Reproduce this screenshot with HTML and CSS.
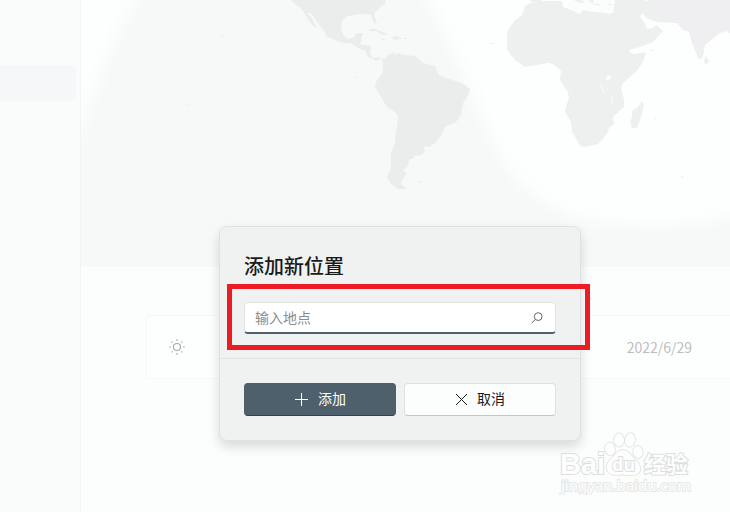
FILE: index.html
```
<!doctype html>
<html lang="zh-CN">
<head>
<meta charset="utf-8">
<link rel="stylesheet" href="styles.css">
<title>添加新位置</title>
</head>
<body>
<div class="app">
    <nav class="sidebar">
        <div class="nav-item"></div>
    </nav>

    <main class="content">
        <svg class="map" viewBox="81 0 649 267" preserveAspectRatio="xMinYMin slice" aria-hidden="true">
            <defs>
                <filter id="soft" x="-20%" y="-20%" width="140%" height="140%">
                    <feGaussianBlur stdDeviation="7"/>
                </filter>
                <linearGradient id="asia" gradientUnits="userSpaceOnUse" x1="640" y1="0" x2="665" y2="0">
                    <stop offset="0" stop-color="#eef0ef"/>
                    <stop offset="1" stop-color="#efeff2"/>
                </linearGradient>
            </defs>
            <!-- daylight -->
            <g fill="#fdfefe" filter="url(#soft)">
                <path d="M30-30H147L136 0 121 27 104 67 86 113 70 160H30z"/>
                <path d="M415-30L427 0C445 32 458 60 472 95C485 128 498 160 520 183C545 210 590 226 645 226Q700 226 740 215L790 195V-30z"/>
            </g>
            <!-- americas -->
            <g fill="#ebedec">
                <path d="M291 0l4 4 6 4 4 6 4 7 4 5 4 3-2-5-4-7-4-4 4 0 6 9 7 9 2 5 9 4 9 3h6l8 5 7 3 3 6 9 4 3-2 3 2 1-2-6-2-5 1-3-5 1-7-11-2 3-11-6 0-3 4-6 2-5-4-2-7 1-7 5-5 8-1 8-1 8 1 3 8 3 1-2-6-1-4 6-7 6-4-1-3z"/>
                <path d="M383 61l5-6 6-3 1 3 3-2 7 2 10 1 8 7 12 3 4 9 13 5 10 3 8 6-1 5-6 9-2 12-5 7-11 5-3 7-7 9-6 4-6-1 2 5-3 4-8 1-1 3h-4l-1 7-5 5 4 2-5 7-1 4 6 5h-9l-8-6-3-6 4-10V153l4-10 1-11 2-15-3-5-8-5-6-10-6-10 2-7 5-6 1-7z"/>
                <path d="M368 31q5-4 10-1l10 4-5 1-7-4zM391 38l4-2 7 2-7 2zM381 39h4v1h-4zM404 38h3v1h-3zM417 182l6-1-3 2zM355 77h2v1h-2zM465 187l3 1zM222 35h2v1h-2zM188 104h2v1h-2z"/>
            </g>
            <!-- africa, arabia and india -->
            <g fill="#eef0ef">
                <path d="M530 3l15-2 17 0 1 6 8 3 9 4 3-4 12 2 12 1 11 17 9 15 3 7 3 2 13-2-3 10-6 9-14 12-2 4 3 13v7l-11 10 1 7-5 4-2 6-9 10-8 2-8 1-3-3-2-4-5-8-1-10-6-10 2-9 2-4-1-7-8-12 1-9-3-3-5-4-5-1-11 2-12 2-10-7-8-10V32l8-12 7-5 3-9z"/>
                <path d="M642 101l2 5-4 14-3 8h-5l-2-6 2-5 0-6 6-4zM529 0h8l6-1-3 3h-7zM654 118h2v1h-2zM681 176l4 1-3 1zM650 50h3v1h-3zM491 43h3v1h-3z"/>
                <path fill="url(#asia)" d="M615 0l-2 13-5 1 7 13 8 12 6 11 11-3 13-5 10-11-7-6-3 3-6 1-2-5-5-7 2-4 6 6 9 3 20 1 6 7 6 2 3 11 7 17 4-3 2-12 15-12 7-2 5 4V0zM705 56l4 5-2 3-3-1z"/>
            </g>
            <path fill="#fbfcfc" d="M573 0h41l-1 12-11 0-9-2-10-2-4 4-10-4-2-5zM606 77l4-2 1 3-3 3-2-1zM600 84l1 0 4 9-1 0zM611 95l1 0 1 9-1 0zM643 0h8l-6 1z"/>
            <path fill="#eef0ef" d="M574 0h8l3 3-5 0zM588 0h5l1 4-3-1zM594 4h6v1h-6zM608 4h4v1h-4z"/>
        </svg>

        <section class="location">
            <svg class="icon-sun" viewBox="0 0 16 16" aria-hidden="true">
                <circle cx="8" cy="8" r="3.5"/>
                <path d="M8 .3v1.7M8 14v1.7M.3 8H2M14 8h1.7M2.6 2.6l1.1 1.1M12.3 12.3l1.1 1.1M2.6 13.4l1.1-1.1M12.3 3.7l1.1-1.1"/>
            </svg>
            <time class="date" datetime="2022-06-29">2022/6/29</time>
        </section>
    </main>
</div>

<div class="overlay">
    <form class="dialog" role="dialog" aria-labelledby="dialog-title">
        <div class="dialog-body">
            <h1 id="dialog-title">添加新位置</h1>
            <div class="search">
                <input class="search-input" type="text" placeholder="输入地点" aria-label="输入地点">
                <svg class="icon-search" viewBox="0 0 12 12" aria-hidden="true">
                    <circle cx="7.2" cy="4.6" r="3.9"/>
                    <path d="M4.4 7.4L.6 11.2"/>
                </svg>
                <span class="highlight"></span>
            </div>
        </div>
        <div class="dialog-footer">
            <button class="btn btn-primary" type="submit">
                <svg class="icon-add" viewBox="0 0 14 14" aria-hidden="true"><path d="M7.500 0v13M1 6.500h13"/></svg>
                <span>添加</span>
            </button>
            <button class="btn" type="button">
                <svg class="icon-close" viewBox="0 0 12 12" aria-hidden="true"><path d="M1 0l11 11M12 0l-11 11"/></svg>
                <span>取消</span>
            </button>
        </div>
    </form>
</div>

<svg class="watermark" viewBox="0 0 136 66" aria-hidden="true">
    <text class="mark-name" x="2" y="45">Bai</text>
    <g class="paw">
        <ellipse cx="52" cy="20" rx="4.8" ry="6.5" transform="rotate(-12 52 20)"/>
        <ellipse cx="61" cy="11" rx="5" ry="6.8"/>
        <ellipse cx="72" cy="11" rx="5" ry="6.8" transform="rotate(12 72 11)"/>
        <ellipse cx="80" cy="23" rx="4.8" ry="6" transform="rotate(-10 80 23)"/>
        <path d="M65 21C60 21 58 25 54 29C49 33 48 37 49 41C52 47 57 46 65 45.500C73 47 79 47 82 42C83 36 80 33 76 29C72 25 70 21 65 21z"/>
    </g>
    <text class="mark-du" x="54" y="42">du</text>
    <text class="mark-cn" x="86" y="43">经验</text>
    <text class="mark-url" x="3" y="62">jingyan.baidu.com</text>
</svg>
</body>
</html>
```

FILE: styles.css
```
* {
    box-sizing: border-box;
}
body {
    margin: 0;
    min-height: 100vh;
    overflow: hidden;
    position: relative;
    font-family: "Noto Sans CJK SC", sans-serif;
    font-size: 14px;
    line-height: 20px;
    color: #1a1a1a;
    background: #fcfefd;
}
.app {
    display: grid;
    grid-template-columns: 81px 1fr;
    min-height: 100vh;
}
.sidebar {
    padding: 65px 4px 0 0;
    background: #fafcfb;
    border-right: 1px solid #f3f5f4;
}
.nav-item {
    height: 36px;
    background: #f6f7f9;
    border-radius: 0 5px 5px 0;
}
.content {
    min-width: 0;
}
.map {
    display: block;
    width: 100%;
    height: 267px;
    background: #f7f8f8;
}
.location {
    display: flex;
    align-items: center;
    justify-content: space-between;
    height: 64px;
    margin: 48px 0 0 65px;
    padding: 0 38px 0 22px;
    background: #fdfefe;
    border: 1px solid #f5f7f6;
    border-right: 0;
    border-radius: 4px 0 0 4px;
}
.icon-sun {
    width: 16px;
    height: 16px;
    fill: none;
    stroke: #a9abaa;
    stroke-width: 1.2;
}
.date {
    color: #bcbebd;
}

/* dialog */
.overlay {
    position: absolute;
    inset: 0;
    display: flex;
    align-items: center;
    justify-content: center;
    padding: 155px 0 0 70px;
}
.dialog {
    width: 362px;
    background: #f0f2f1;
    border: 1px solid #dfe1e0;
    border-radius: 8px;
    box-shadow: 0 6px 12px rgba(0, 0, 0, 0.14);
}
.dialog-body {
    padding: 25px 24px 24px;
    border-bottom: 1px solid #e1e3e2;
}
h1 {
    margin: 0 0 22px;
    font-size: 20px;
    font-weight: 500;
    line-height: 28px;
}
.search {
    position: relative;
    display: flex;
    align-items: center;
}
.search-input {
    width: 100%;
    height: 32px;
    padding: 0 36px 2px 10px;
    font: inherit;
    background: #fff;
    border: 1px solid #e2e4e3;
    border-bottom: 2px solid #4e606c;
    border-radius: 4px;
    outline: 0;
}
.search-input::placeholder {
    color: #8c8c8c;
}
.icon-search {
    position: absolute;
    right: 13px;
    width: 12px;
    height: 12px;
    fill: none;
    stroke: #666;
}
.highlight {
    position: absolute;
    inset: -18px -34px -16px -17px;
    border: 5px solid #ed1c24;
    pointer-events: none;
}
.dialog-footer {
    display: grid;
    grid-template-columns: 1fr 1fr;
    gap: 8px;
    padding: 24px;
}
.btn {
    display: flex;
    align-items: center;
    justify-content: center;
    gap: 10px;
    height: 33px;
    padding: 0;
    font: inherit;
    color: #1a1a1a;
    background: #fcfdfd;
    border: 1px solid #dfe1e0;
    border-bottom-color: #c4c6c5;
    border-radius: 4px;
}
.btn span {
    padding-bottom: 4px;
}
.btn svg {
    fill: none;
    stroke: currentColor;
}
.btn-primary {
    color: #fff;
    background: #4e606c;
    border-color: #4e606c;
    border-bottom-color: #33424c;
}
.icon-add {
    width: 14px;
    height: 14px;
}
.icon-close {
    width: 12px;
    height: 12px;
}

/* watermark */
.watermark {
    position: absolute;
    right: 36px;
    bottom: 17px;
    width: 136px;
    height: 66px;
    fill: #fdfefe;
    stroke: #dcdedd;
    stroke-width: 2;
    paint-order: stroke;
    font-family: "Noto Sans", sans-serif;
}
.paw {
    stroke-width: 1.5;
}
.mark-name {
    font-family: "Liberation Sans", sans-serif;
    font-size: 29px;
    font-weight: bold;
}
.mark-du {
    font-size: 18px;
    font-weight: bold;
}
.mark-cn {
    font-family: "Noto Sans CJK SC", sans-serif;
    font-size: 22px;
    font-weight: bold;
}
.mark-url {
    font-size: 15px;
    stroke: #e6e8e7;
}
```
